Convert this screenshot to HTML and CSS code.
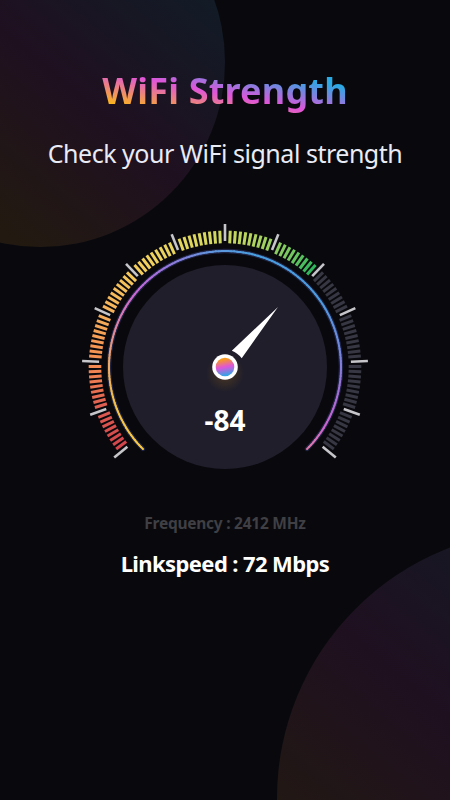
FILE: index.html
```html
<!DOCTYPE html>
<html lang="en">
<head>
  <meta charset="UTF-8" />
  <title>WiFi Strength</title>
  <link rel="stylesheet" href="styles.css">
</head>
<body>
  <main class="screen">
    <div class="blob blob-top"></div>
    <div class="blob blob-bottom"></div>

    <h1><span class="title">WiFi Strength</span></h1>
    <p class="subtitle">Check your WiFi signal strength</p>

    <svg class="gauge" viewBox="-150 -150 300 260">
      <defs>
        <linearGradient id="hub-fill" x1="0.4" y1="0" x2="0.6" y2="1">
          <stop offset="0.08" stop-color="#f89a1c" />
          <stop offset="0.5" stop-color="#df55d9" />
          <stop offset="0.95" stop-color="#32a5e6" />
        </linearGradient>
        <radialGradient id="hub-glow">
          <stop offset="0.4" stop-color="#5a4220" stop-opacity="0.45" />
          <stop offset="1" stop-color="#5a4220" stop-opacity="0" />
        </radialGradient>
      </defs>
      <circle class="dial" r="102" />
      <g id="ticks"></g>
      <g id="ring"></g>
      <circle cy="6" r="19" fill="url(#hub-glow)" />
      <path class="needle" d="M53 -60 L16.7 -8.8 Q12.5 -14 6.8 -16.2 Z" />
      <circle r="12.8" fill="#fff" />
      <circle r="9.3" fill="url(#hub-fill)" />
      <text class="value" x="0" y="63.5">-84</text>
    </svg>

    <p class="frequency">Frequency : 2412 MHz</p>
    <p class="linkspeed">Linkspeed : 72 Mbps</p>
  </main>

  <script src="gauge.js"></script>
</body>
</html>
```

FILE: styles.css
```css
body {
  margin: 0;
  background: #09090d;
  font-family: "Noto Sans", "Open Sans", sans-serif;
  color: #fff;
}

.screen {
  position: relative;
  display: flex;
  flex-direction: column;
  align-items: center;
  width: 450px;
  height: 800px;
  overflow: hidden;
  isolation: isolate;
}

h1,
p {
  margin: 0;
  white-space: nowrap;
}

/* background circles */
.blob {
  position: absolute;
  z-index: -1;
  border-radius: 50%;
  background: linear-gradient(40deg, #221a10 20%, #1f1020 50%, #121b26 80%);
}

.blob-top {
  left: -144px;
  top: -123px;
  width: 369px;
  height: 370px;
}

.blob-bottom {
  left: 277px;
  top: 530px;
  width: 537px;
  height: 537px;
}

h1 {
  margin-top: 66px;
  font-size: 36px;
  line-height: 50px;
  font-weight: 700;
  letter-spacing: 0.2px;
}

.title {
  background: linear-gradient(to top right, #fbb51c 13%, #df55d9 46%, #2aa9e4 78%);
  -webkit-background-clip: text;
  background-clip: text;
  color: transparent;
}

.subtitle {
  margin-top: 20px;
  font-size: 25px;
  line-height: 34px;
  letter-spacing: -0.48px;
  color: #e9ebf5;
}

.gauge {
  width: 300px;
  height: 260px;
  margin-top: 47px;
}

.dial {
  fill: #201e2b;
}

.tick {
  stroke-width: 3;
}

.tick-major {
  stroke: #c6c6ca;
  stroke-width: 2.6;
}

.tick-off {
  stroke: #363742;
}

.ring-halo {
  fill: none;
  stroke: #31376a;
  stroke-width: 4.4;
  stroke-linecap: round;
  opacity: 0.6;
}

.ring-part {
  fill: none;
  stroke-width: 2;
  stroke-linecap: round;
}

.needle {
  fill: #fff;
}

.value {
  fill: #fff;
  font-size: 28px;
  font-weight: 700;
  text-anchor: middle;
}

.frequency {
  margin-top: 35px;
  font-size: 15.5px;
  line-height: 22px;
  font-weight: 700;
  letter-spacing: -0.26px;
  color: #3f3f44;
}

.linkspeed {
  margin-top: 14px;
  font-size: 22px;
  line-height: 30px;
  font-weight: 700;
  letter-spacing: -0.6px;
}
```

FILE: gauge.js
```js
const STEP = 2.19; // degrees between two ticks
const TICKS = 59; // ticks on each side of the top one
const LEVEL = 20; // last lit tick

const tickColors = [
  [-129, [208, 66, 74]],
  [-108, [222, 94, 82]],
  [-90, [243, 137, 82]],
  [-62, [245, 180, 92]],
  [-38, [243, 208, 94]],
  [-10, [218, 216, 94]],
  [10, [186, 213, 94]],
  [30, [118, 200, 96]],
  [44, [34, 178, 92]]
];

const ringColors = [
  [-135, [250, 203, 66]],
  [-105, [243, 190, 72]],
  [-85, [236, 164, 110]],
  [-68, [222, 128, 170]],
  [-50, [200, 100, 214]],
  [-30, [148, 120, 220]],
  [-8, [98, 150, 222]],
  [15, [72, 158, 222]],
  [55, [76, 154, 222]],
  [80, [112, 136, 222]],
  [105, [168, 108, 212]],
  [120, [204, 98, 208]],
  [135, [224, 124, 166]]
];

function colorAt(stops, angle) {
  let i = 1;
  while (i < stops.length - 1 && stops[i][0] < angle) i++;
  const [a, from] = stops[i - 1];
  const [b, to] = stops[i];
  const t = Math.min(1, Math.max(0, (angle - a) / (b - a)));
  return 'rgb(' + from.map((c, k) => Math.round(c + (to[k] - c) * t)).join(',') + ')';
}

// 0 degrees is the top of the gauge, clockwise
function point(radius, angle) {
  const rad = angle * Math.PI / 180;
  return [radius * Math.sin(rad), -radius * Math.cos(rad)];
}

function add(parent, tag, attrs) {
  const el = document.createElementNS('http://www.w3.org/2000/svg', tag);
  for (const name in attrs) el.setAttribute(name, attrs[name]);
  parent.appendChild(el);
}

function drawTicks() {
  const group = document.getElementById('ticks');
  for (let i = -TICKS; i <= TICKS; i++) {
    const major = i % 10 === 0 || Math.abs(i) === TICKS;
    const [x1, y1] = point(major ? 126 : 123.7, i * STEP);
    const [x2, y2] = point(major ? 143 : 136.3, i * STEP);
    const attrs = { x1, y1, x2, y2, class: 'tick' };
    if (major) attrs.class = 'tick-major';
    else if (i > LEVEL) attrs.class = 'tick tick-off';
    else attrs.stroke = colorAt(tickColors, i * STEP);
    add(group, 'line', attrs);
  }
}

function drawRing() {
  const group = document.getElementById('ring');
  const r = 116;
  const arc = (from, to, large) =>
    `M${point(r, from)} A${r} ${r} 0 ${large} 1 ${point(r, to)}`;
  add(group, 'path', { class: 'ring-halo', d: arc(-135, 135, 1) });
  for (let a = -135; a < 135; a += 1.5) {
    add(group, 'path', {
      class: 'ring-part',
      d: arc(a, a + 1.5, 0),
      stroke: colorAt(ringColors, a)
    });
  }
}

drawTicks();
drawRing();
```
